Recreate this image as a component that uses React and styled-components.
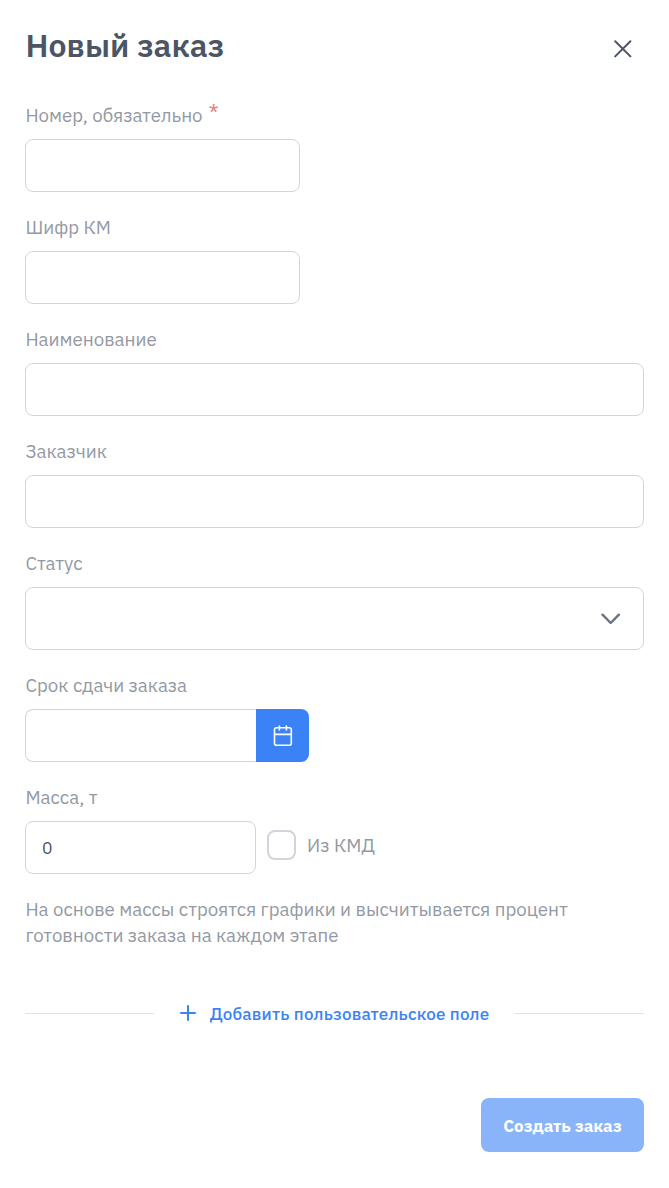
import React from 'react'
import styled, { createGlobalStyle } from 'styled-components'

const App = () => {
    return (
        <>
            <GlobalStyle />
            <Dialog>
                <Header>
                    <Title>Новый заказ</Title>
                    <CloseButton aria-label='Закрыть'>
                        <svg width='18' height='18' viewBox='0 0 18 18' fill='none' stroke='currentColor' strokeWidth='2' strokeLinecap='round'>
                            <path d='M1.2 1.2 16.4 16.4M16.4 1.2 1.2 16.4' />
                        </svg>
                    </CloseButton>
                </Header>
                <Form>
                    <Field>
                        <Label><span>Номер, обязательно</span><em>*</em></Label>
                        <Input $width='275px' />
                    </Field>
                    <Field>
                        <Label><span>Шифр КМ</span></Label>
                        <Input $width='275px' />
                    </Field>
                    <Field>
                        <Label><span>Наименование</span></Label>
                        <Input />
                    </Field>
                    <Field>
                        <Label><span>Заказчик</span></Label>
                        <Input />
                    </Field>
                    <Field>
                        <Label><span>Статус</span></Label>
                        <Select>
                            <svg width='20' height='12' viewBox='0 0 20 12' fill='none' stroke='currentColor' strokeWidth='2.4' strokeLinecap='round' strokeLinejoin='round'>
                                <path d='M2.5 1.7 10.7 10 18.9 1.7' />
                            </svg>
                        </Select>
                    </Field>
                    <Field>
                        <Label><span>Срок сдачи заказа</span></Label>
                        <Row>
                            <Input $width='231px' $joined />
                            <DateButton aria-label='Выбрать дату'>
                                <svg width='20' height='22' viewBox='0 0 20 22' fill='none' stroke='currentColor' strokeWidth='1.6' strokeLinecap='round' strokeLinejoin='round'>
                                    <rect x='1.5' y='2.8' width='16.8' height='17.4' rx='2' />
                                    <path d='M6.4 1v4M13.4 1v4M1.5 9.4h16.8' />
                                </svg>
                            </DateButton>
                        </Row>
                    </Field>
                    <Field>
                        <Label><span>Масса, т</span></Label>
                        <Row>
                            <Input $width='231px' defaultValue='0' />
                            <Check>
                                <Box type='checkbox' />
                                <span>Из КМД</span>
                            </Check>
                        </Row>
                    </Field>
                </Form>
                <Hint>
                    <span>На основе массы строятся графики и высчитывается процент</span>
                    <span>готовности заказа на каждом этапе</span>
                </Hint>
                <Divider>
                    <AddButton>
                        <svg width='16' height='16' viewBox='0 0 16 16' fill='none' stroke='currentColor' strokeWidth='2' strokeLinecap='round'>
                            <path d='M8 1v14M1 8h14' />
                        </svg>
                        <span>Добавить пользовательское поле</span>
                    </AddButton>
                </Divider>
                <Footer>
                    <Submit>Создать заказ</Submit>
                </Footer>
            </Dialog>
        </>
    )
}

const GlobalStyle = createGlobalStyle`
    * {
        box-sizing: border-box;
    }
    body {
        margin: 0;
        background: #fff;
        font-family: 'IBM Plex Sans', 'Noto Sans', sans-serif;
    }
    button, input {
        font-family: inherit;
    }
    svg {
        display: block;
        flex: none;
    }
`

const Dialog = styled.div`
    height: 1188px;
    padding: 25px 25px 36px;
    display: flex;
    flex-direction: column;
    color: #9399a4;
    font-size: 18.67px;
`

const Header = styled.header`
    display: flex;
    justify-content: space-between;
    height: 78px;
`

const Title = styled.h1`
    margin: 0;
    padding-left: 0.6px;
    font-size: 32px;
    line-height: 40px;
    font-weight: 600;
    color: #4b5563;
    white-space: nowrap;
`

const CloseButton = styled.button`
    width: 43px;
    height: 47px;
    padding: 0;
    border: 0;
    background: none;
    color: #4b5563;
    display: flex;
    align-items: center;
    justify-content: center;
`

const Form = styled.form`
    display: flex;
    flex-direction: column;
    gap: 23px;
`

const Field = styled.div`
    display: flex;
    flex-direction: column;
    gap: 12px;
`

const Label = styled.label`
    display: flex;
    height: 24px;
    padding-left: 0.4px;
    line-height: 25px;
    white-space: nowrap;
    em {
        margin-left: 6px;
        font-size: 23px;
        line-height: 19px;
        font-style: normal;
        color: #eb8282;
    }
`

const Input = styled.input`
    width: ${({ $width }) => $width || '100%'};
    height: 53px;
    padding: 0 16px;
    border: 1px solid #d1d5db;
    border-radius: ${({ $joined }) => $joined ? '8px 0 0 8px' : '8px'};
    ${({ $joined }) => $joined && 'border-right: 0;'}
    font-size: 17.5px;
    color: #4b5563;
    background: #fff;
    outline: none;
`

const Select = styled.div`
    height: 63px;
    padding: 0 23px;
    border: 1px solid #d1d5db;
    border-radius: 8px;
    color: #6b7280;
    display: flex;
    align-items: center;
    justify-content: flex-end;
    svg {
        overflow: visible;
    }
`

const Row = styled.div`
    display: flex;
`

const DateButton = styled.button`
    width: 53px;
    height: 53px;
    padding: 0;
    border: 0;
    border-radius: 0 8px 8px 0;
    background: #3b82f6;
    color: #fff;
    display: flex;
    align-items: center;
    justify-content: center;
`

const Check = styled.label`
    display: flex;
    align-items: center;
    gap: 11px;
    height: 48px;
    margin-left: 11px;
`

const Box = styled.input`
    appearance: none;
    width: 29px;
    height: 30px;
    margin: 0;
    border: 2px solid #d1d5db;
    border-radius: 8px;
`

const Hint = styled.p`
    margin: 22px 0 0;
    padding-left: 0.4px;
    line-height: 26px;
    white-space: nowrap;
    span {
        display: block;
    }
`

const Divider = styled.div`
    display: flex;
    align-items: center;
    gap: 26px;
    height: 30px;
    margin-top: 50px;
    &::before,
    &::after {
        content: '';
        flex: 1;
        height: 1px;
        background: #e0e2e5;
    }
`

const AddButton = styled.button`
    padding: 0;
    border: 0;
    background: none;
    color: #3b82f6;
    font-size: 17px;
    letter-spacing: 0.18px;
    font-weight: 500;
    white-space: nowrap;
    display: flex;
    align-items: center;
    gap: 14px;
    span {
        padding-top: 1px;
    }
`

const Footer = styled.footer`
    display: flex;
    justify-content: flex-end;
    margin-top: auto;
`

const Submit = styled.button`
    width: 163px;
    height: 54px;
    padding: 2px 0 0;
    border: 0;
    border-radius: 8px;
    background: #89b4fa;
    color: #fff;
    font-size: 16.9px;
    font-weight: 700;
    white-space: nowrap;
`

export default App
